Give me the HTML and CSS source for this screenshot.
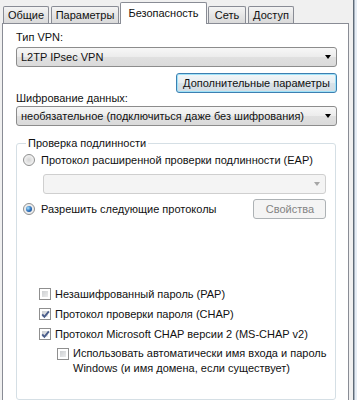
FILE: index.html
```html
<!DOCTYPE html>
<html>
    <head>
        <meta charset="utf-8">
        <title>Свойства VPN-подключения</title>
        <link rel="stylesheet" href="styles.css">
    </head>
    <body>
        <div class="window">
            <div class="dialog">
                <div class="tabs">
                    <div class="tab tab-general">Общие</div>
                    <div class="tab tab-params">Параметры</div>
                    <div class="tab tab-active">Безопасность</div>
                    <div class="tab tab-net">Сеть</div>
                    <div class="tab tab-access">Доступ</div>
                </div>
                <div class="panel">
                    <div class="label">Тип VPN:</div>
                    <div class="combo">L2TP IPsec VPN<span class="arrow"></span></div>
                    <div class="row-right">
                        <div class="btn btn-default">Дополнительные параметры</div>
                    </div>
                    <div class="label label-enc">Шифрование данных:</div>
                    <div class="combo">необязательное (подключиться даже без шифрования)<span class="arrow"></span></div>

                    <fieldset class="group">
                        <legend>Проверка подлинности</legend>
                        <div class="option option-first">
                            <span class="radio"></span>
                            <span>Протокол расширенной проверки подлинности (EAP)</span>
                        </div>
                        <div class="combo combo-disabled"><span class="arrow"></span></div>
                        <div class="option option-props">
                            <span class="radio radio-on"><span class="dot"></span></span>
                            <span>Разрешить следующие протоколы</span>
                            <div class="btn btn-disabled">Свойства</div>
                        </div>

                        <div class="checks">
                            <div class="check-row">
                                <span class="check"></span>
                                <span>Незашифрованный пароль (PAP)</span>
                            </div>
                            <div class="check-row">
                                <span class="check"><svg width="11" height="11" viewBox="0 0 11 11"><path d="M2.2 5.4 L4.4 7.9 L8.9 2.4" fill="none" stroke="#4a5d8a" stroke-width="1.9"/></svg></span>
                                <span>Протокол проверки пароля (CHAP)</span>
                            </div>
                            <div class="check-row">
                                <span class="check"><svg width="11" height="11" viewBox="0 0 11 11"><path d="M2.2 5.4 L4.4 7.9 L8.9 2.4" fill="none" stroke="#4a5d8a" stroke-width="1.9"/></svg></span>
                                <span>Протокол Microsoft CHAP версии 2 (MS-CHAP v2)</span>
                            </div>
                            <div class="check-row check-sub">
                                <span class="check"></span>
                                <span>Использовать автоматически имя входа и пароль<br>Windows (и имя домена, если существует)</span>
                            </div>
                        </div>
                    </fieldset>
                </div>
            </div>
            <div class="edge"></div>
            <div class="outside"></div>
        </div>
    </body>
</html>
```

FILE: styles.css
```css
html {
    height: 100%;
}
body {
    margin: 0px;
    height: 400px;
    overflow: hidden;
    background-color: #f0f0f0;
    font-family: "Liberation Sans", Arial, sans-serif;
    font-size: 11px;
    color: #111;
    white-space: nowrap;
}
.window {
    display: flex;
    flex-flow: row nowrap;
    height: 100%;
}
.dialog {
    width: 353px;
    display: flex;
    flex-flow: column nowrap;
}
.edge {
    width: 1px;
    background-color: #5f6b78;
    border-right: 1px solid #a9b3bf;
}
.outside {
    flex: 1;
    background-color: #e6edf5;
}

/* tabs */
.tabs {
    display: flex;
    flex-flow: row nowrap;
    align-items: flex-end;
    height: 25px;
    padding-left: 3px;
}
.tab {
    box-sizing: border-box;
    height: 17px;
    line-height: 16px;
    text-align: center;
    border: 1px solid #898c95;
    border-bottom: 0px;
    border-radius: 2px 2px 0px 0px;
    background: linear-gradient(#f4f4f4, #e6e6e6 50%, #dadada);
    margin-right: 2px;
}
.tab-active {
    height: 22px;
    line-height: 20px;
    margin-bottom: -1px;
    margin-right: 1px;
    background: #fff;
    position: relative;
    z-index: 1;
}
.tab-general { width: 46px; }
.tab-params { width: 68px; margin-right: 1px; }
.tab-active { width: 87px; }
.tab-net { width: 38px; }
.tab-access { width: 46px; }

/* panel */
.panel {
    flex: 1;
    box-sizing: border-box;
    width: 347px;
    margin-left: 2px;
    border: 1px solid #898c95;
    border-bottom: 0px;
    background-color: #fff;
    padding: 6px 11px 0px 13px;
}
.label {
    line-height: 14px;
}
.label-enc {
    margin-top: -2px;
}
.combo {
    box-sizing: border-box;
    display: flex;
    align-items: center;
    height: 20px;
    margin-top: 3px;
    padding: 0px 5px 0px 4px;
    border: 1px solid #8c8c8c;
    border-radius: 3px;
    background: linear-gradient(#f7f7f7, #ececec 50%, #e0e0e0 51%, #dadada);
}
.label-enc + .combo {
    margin-top: 1px;
}
.arrow {
    margin-left: auto;
    width: 0px;
    height: 0px;
    border-left: 3.5px solid transparent;
    border-right: 3.5px solid transparent;
    border-top: 4px solid #000;
}
.combo-disabled {
    margin: 7px 0px 0px 20px;
    border-color: #cfcfcf;
    background: #f4f4f4;
}
.combo-disabled .arrow {
    border-top-color: #a6a6a6;
}
.row-right {
    display: flex;
    justify-content: flex-end;
    margin-top: 6px;
}
.btn {
    box-sizing: border-box;
    height: 20px;
    line-height: 18px;
    padding: 0px 4px;
    border-radius: 3px;
}
.btn-default {
    width: 161px;
    text-align: center;
    border: 1px solid #3c7fb1;
    box-shadow: inset 0px 0px 0px 1px #9fe2f8;
    background: linear-gradient(#f2f6f8, #e6edf1 50%, #d9e2e8 51%, #d2dce3);
}
.btn-disabled {
    width: 73px;
    margin-left: auto;
    text-align: center;
    border: 1px solid #adb2b5;
    background-color: #f4f4f4;
    color: #838383;
}

/* group box */
.group {
    margin: 10px 1px 0px 0px;
    padding: 0px 9px 23px 6px;
    border: 1px solid #d5dfe5;
    border-radius: 3px;
}
.group legend {
    margin-left: 3px;
    padding: 0px 2px;
    line-height: 14px;
}
.option {
    display: flex;
    align-items: center;
    gap: 6px;
    height: 14px;
}
.option-first {
    margin-top: 3px;
}
.option-props {
    height: 20px;
    margin-top: 5px;
}
.radio {
    box-sizing: border-box;
    display: flex;
    align-items: center;
    justify-content: center;
    width: 12px;
    height: 12px;
    border: 1px solid #8e8f8f;
    border-radius: 50%;
    background: radial-gradient(circle, #d4d4d4 0%, #ececec 55%, #f8f8f8 100%);
}
.dot {
    width: 6px;
    height: 6px;
    border-radius: 50%;
    background: radial-gradient(circle at 35% 35%, #a8e4ff 0%, #3275bf 50%, #113f80 100%);
}

.checks {
    margin-top: 65px;
    padding-left: 16px;
}
.check-row {
    display: flex;
    align-items: center;
    gap: 4px;
    height: 20px;
}
.check {
    box-sizing: border-box;
    display: flex;
    align-items: center;
    justify-content: center;
    width: 12px;
    height: 12px;
    border: 1px solid #8f8f8f;
    background: linear-gradient(135deg, #c4c7ca, #f5f5f5);
    box-shadow: inset 0px 0px 0px 2px #fff;
}
.check svg {
    flex: none;
}
.check-sub {
    align-items: flex-start;
    height: auto;
    margin-top: 2px;
    padding-left: 18px;
    line-height: 15px;
}
.check-sub .check {
    margin-top: 2px;
}
```
